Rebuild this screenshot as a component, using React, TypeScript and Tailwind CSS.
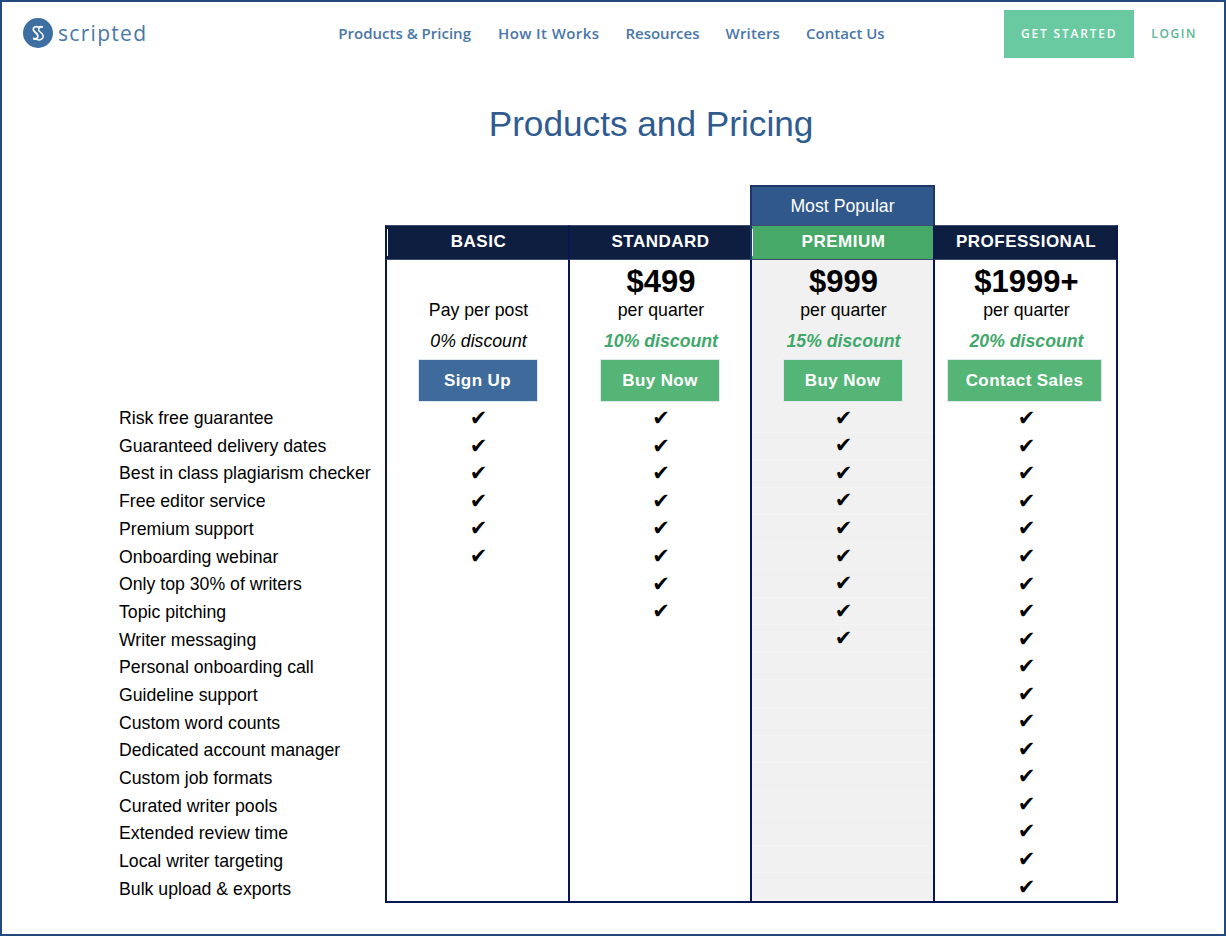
const features = [
  { name: "Risk free guarantee", tiers: 4 },
  { name: "Guaranteed delivery dates", tiers: 4 },
  { name: "Best in class plagiarism checker", tiers: 4 },
  { name: "Free editor service", tiers: 4 },
  { name: "Premium support", tiers: 4 },
  { name: "Onboarding webinar", tiers: 4 },
  { name: "Only top 30% of writers", tiers: 3 },
  { name: "Topic pitching", tiers: 3 },
  { name: "Writer messaging", tiers: 2 },
  { name: "Personal onboarding call", tiers: 1 },
  { name: "Guideline support", tiers: 1 },
  { name: "Custom word counts", tiers: 1 },
  { name: "Dedicated account manager", tiers: 1 },
  { name: "Custom job formats", tiers: 1 },
  { name: "Curated writer pools", tiers: 1 },
  { name: "Extended review time", tiers: 1 },
  { name: "Local writer targeting", tiers: 1 },
  { name: "Bulk upload & exports", tiers: 1 },
];

function Logo() {
  return (
    <div className="mb-[2px] flex items-center">
      <svg width="30" height="30" viewBox="0 0 30 30">
        <circle cx="15" cy="15" r="15" fill="#3d6fa3" />
        <path
          d="M15 9.2C12.6 7.9 9.9 9.2 10.3 11.6c.5 2.6 4 3.2 4.5 6 .4 2.6-2.2 4-4.6 3.2"
          fill="none"
          stroke="#fff"
          strokeWidth="1.7"
        />
        <path
          d="M15 9.2c1.4-.9 3.6-1 5 .1M20 9.3c-2.4-.7-4.8.4-4.4 2.6.4 2.2 4 3.2 4.6 5.8.5 2.8-2.8 5-6 4-1.600-.5-2.800-.9-4-1.900"
          fill="none"
          stroke="#fff"
          strokeWidth="1.4"
        />
      </svg>
      <span className="ml-[5px] font-['Open_Sans'] text-[21px] font-medium leading-none tracking-[1.3px] text-[#4a78a8]">
        scripted
      </span>
    </div>
  );
}

function Column({
  title,
  tier,
  price,
  sub,
  discount,
  button,
  buttonWidth,
  highlight,
  tick,
  width,
  last,
}: {
  title: string;
  tier: number;
  price?: string;
  sub: string;
  discount: string;
  button: string;
  buttonWidth: string;
  highlight?: boolean;
  tick?: boolean;
  width: string;
  last?: boolean;
}) {
  const isBasic = tier === 4;
  return (
    <div className={`flex flex-col ${width}`}>
      {highlight ? (
        <div className="-mr-[2px] h-[40px] border-x-2 border-t-2 border-[#1d3768] bg-[#30588a] text-center text-[17.7px] leading-[38px] text-white">
          Most Popular
        </div>
      ) : (
        <div className="h-[40px]" />
      )}
      <div
        className={`flex h-[35px] border-l-2 border-y border-y-[#3d4d70] text-[17px] font-bold leading-[32px] tracking-[0.5px] text-white ${
          last ? "border-r-2" : ""
        } ${
          highlight
            ? "bg-[#47a968] border-l-[#1d3768]"
            : "bg-[#0e1e40] border-l-[#0a1650] border-r-[#0a1650]"
        }`}
      >
        {tick && <span className="my-[3px] w-px bg-white" />}
        <span className="grow pl-[1px] text-center">{title}</span>
      </div>
      <div
        className={`flex grow flex-col border-l-2 border-b-2 border-[#0a1650] ${
          last ? "border-r-2" : ""
        } ${highlight ? "bg-[#f1f1f1]" : "bg-white"}`}
      >
        <div className="flex h-[40px] items-center justify-center pl-[2px] pt-[4px] text-[31px] font-bold text-black">
          {price}
        </div>
        <div className="h-[25px] pl-[2px] text-center text-[17.7px] leading-[20px] text-black">{sub}</div>
        <div
          className={`h-[34px] pl-[2px] pt-[4px] text-center text-[17.7px] italic leading-[24px] ${
            isBasic ? "text-black" : "font-bold text-[#3fa86a]"
          }`}
        >
          {discount}
        </div>
        <div className={`flex h-[46px] justify-center ${last ? "pr-[2px]" : ""}`}>
          <button
            className={`h-[43px] border border-[#dfe8ee] pt-[1px] text-[17px] font-bold tracking-[0.4px] text-white ${buttonWidth} ${
              isBasic ? "bg-[#3f6b9c]" : "bg-[#55b577]"
            }`}
          >
            {button}
          </button>
        </div>
        {features.map((f) => (
          <div
            key={f.name}
            className={`flex h-[27.55px] items-center justify-center pl-[2px] font-['DejaVu_Sans'] text-[21px] leading-none text-black ${
              highlight ? "border-b border-b-[#f4f4f4]" : ""
            }`}
          >
            {f.tiers >= tier ? "✔" : ""}
          </div>
        ))}
      </div>
    </div>
  );
}

export default function App() {
  return (
    <div className="h-[936px] w-[1226px] overflow-hidden border-2 border-[#234a7d] bg-white font-['Liberation_Sans',sans-serif]">
      <header className="flex h-[64px] items-center pl-[21px]">
        <Logo />
        <nav className="mb-[2px] ml-[191px] flex gap-[26px] font-['Open_Sans'] text-[15px] font-semibold text-[#4a76a8]">
          <a className="mr-px">Products &amp; Pricing</a>
          <a className="tracking-[0.4px]">How It Works</a>
          <a>Resources</a>
          <a className="tracking-[0.2px]">Writers</a>
          <a>Contact Us</a>
        </nav>
        <a className="ml-auto flex h-[48px] w-[130px] items-center justify-center bg-[#69c9a0] font-['Open_Sans'] text-[12px] font-semibold tracking-[1.8px] text-white">
          GET STARTED
        </a>
        <a className="ml-[17px] mr-[27px] font-['Open_Sans'] text-[12px] font-semibold tracking-[1.6px] text-[#5bb592]">
          LOGIN
        </a>
      </header>
      <h1 className="mt-[36px] pl-[76px] text-center text-[35.2px] leading-[44px] text-[#2f5b8f]">
        Products and Pricing
      </h1>
      <div className="ml-[117px] mt-[39px] flex">
        <div className="w-[266px] pt-[219.5px] text-[17.7px] text-black">
          {features.map((f) => (
            <div key={f.name} className="flex h-[27.7px] items-center">
              {f.name}
            </div>
          ))}
        </div>
        <Column
          title="BASIC"
          tier={4}
          sub="Pay per post"
          discount="0% discount"
          button="Sign Up"
          buttonWidth="w-[120px]"
          width="w-[183px]"
          tick
        />
        <Column
          title="STANDARD"
          tier={3}
          price="$499"
          sub="per quarter"
          discount="10% discount"
          button="Buy Now"
          buttonWidth="w-[120px]"
          width="w-[182px]"
        />
        <Column
          title="PREMIUM"
          tier={2}
          price="$999"
          sub="per quarter"
          discount="15% discount"
          button="Buy Now"
          buttonWidth="w-[120px]"
          width="w-[183px]"
          highlight
          tick
        />
        <Column
          title="PROFESSIONAL"
          tier={1}
          price="$1999+"
          sub="per quarter"
          discount="20% discount"
          button="Contact Sales"
          buttonWidth="w-[155px]"
          width="w-[185px]"
          last
        />
      </div>
    </div>
  );
}
